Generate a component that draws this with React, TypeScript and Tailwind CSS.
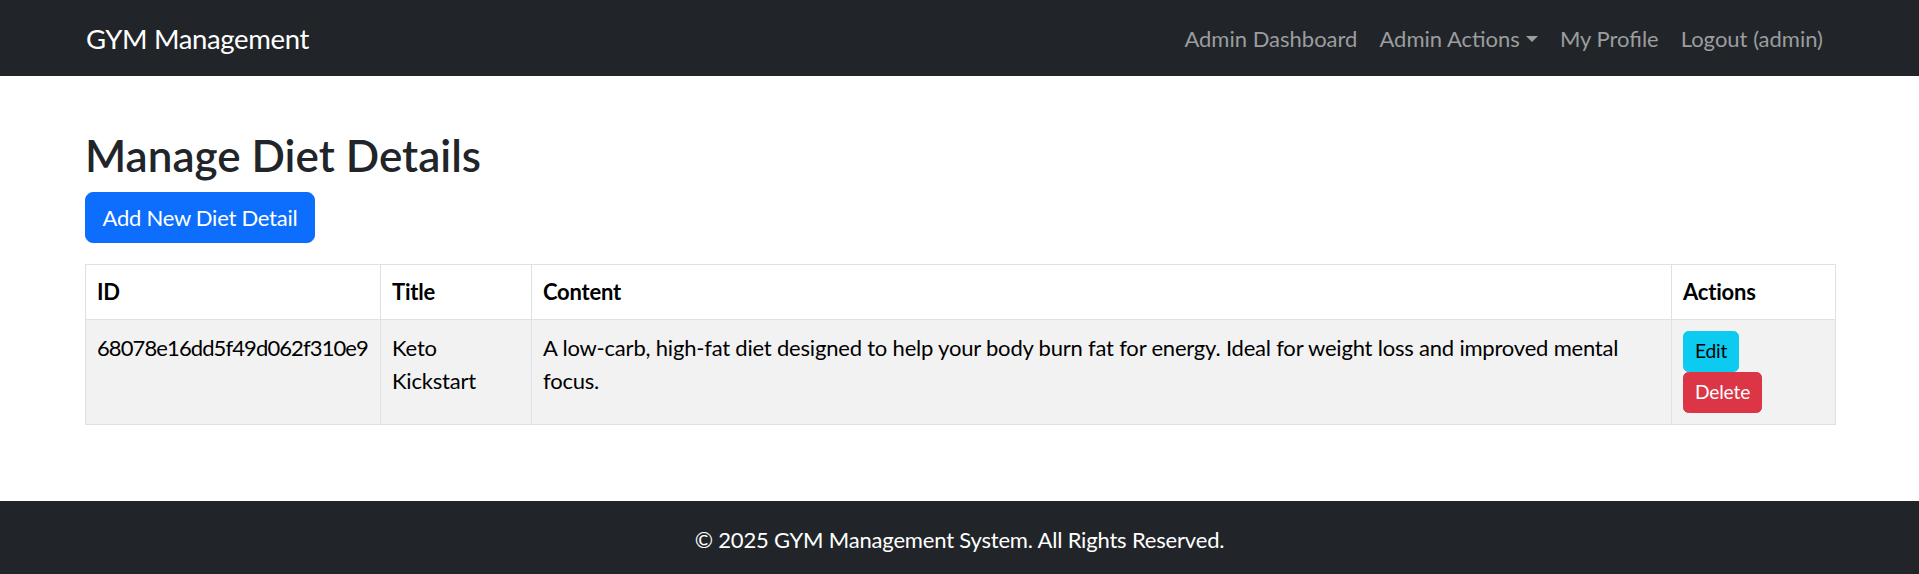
import React from "react";

const font = { fontFamily: "Lato, 'Noto Sans', sans-serif" };

function NavLink({ children, caret }: { children: React.ReactNode; caret?: boolean }) {
  return (
    <a href="#" className="flex items-center px-[11px] leading-[33px] text-[22px] text-[#9b9d9f] hover:text-[#bfc1c3]">
      {children}
      {caret && (
        <span className="ml-[6px] mt-[2px] inline-block h-0 w-0 border-x-[6.5px] border-t-[6.5px] border-x-transparent border-t-[#9b9d9f]" />
      )}
    </a>
  );
}

export default function App() {
  return (
    <div style={font} className="min-h-screen bg-white text-[#212529]">
      <nav className="flex h-[76px] items-center justify-between bg-[#212529] pl-[86px] pr-[85px]">
        <a href="#" className="text-[27.5px] leading-[41px] tracking-[-0.35px] text-white">
          GYM Management
        </a>
        <div className="flex items-center">
          <NavLink>Admin Dashboard</NavLink>
          <NavLink caret>Admin Actions</NavLink>
          <NavLink>My Profile</NavLink>
          <NavLink>Logout (admin)</NavLink>
        </div>
      </nav>

      <main className="px-[85px] pt-[53px] pb-[76px]">
        <h2 className="mb-[10px] text-[44px] font-semibold leading-[1.2]">Manage Diet Details</h2>
        <button
          type="button"
          className="h-[51px] rounded-[8px] border border-[#0d6efd] bg-[#0d6efd] px-[16.5px] text-[22px] leading-[33px] tracking-[-0.25px] text-white"
        >
          Add New Diet Detail
        </button>

        <table className="mt-[21px] w-[1750px] table-fixed border-collapse text-[22px] leading-[33px] tracking-[-0.2px] text-black">
          <colgroup>
            <col className="w-[295px]" />
            <col className="w-[151px]" />
            <col className="w-[1140px]" />
            <col className="w-[164px]" />
          </colgroup>
          <thead>
            <tr className="bg-white text-left">
              <th className="border border-[#dee2e6] px-[11px] py-[10.5px] font-bold">ID</th>
              <th className="border border-[#dee2e6] px-[11px] py-[10.5px] font-bold">Title</th>
              <th className="border border-[#dee2e6] px-[11px] py-[10.5px] font-bold">Content</th>
              <th className="border border-[#dee2e6] px-[11px] py-[10.5px] font-bold">Actions</th>
            </tr>
          </thead>
          <tbody>
            <tr className="bg-[#f2f2f2] align-top">
              <td className="border border-[#dee2e6] p-[11px] tracking-[-0.9px]">68078e16dd5f49d062f310e9</td>
              <td className="border border-[#dee2e6] p-[11px]">
                Keto
                <br />
                Kickstart
              </td>
              <td className="border border-[#dee2e6] p-[11px]">
                A low-carb, high-fat diet designed to help your body burn fat for energy. Ideal for weight loss and improved mental
                <br />
                focus.
              </td>
              <td className="border border-[#dee2e6] p-[11px]">
                <div className="flex flex-col items-start">
                  <button
                    type="button"
                    className="rounded-[5.5px] border border-[#0dcaf0] bg-[#0dcaf0] px-[11px] py-[5.5px] text-[19.25px] leading-[28px] text-black"
                  >
                    Edit
                  </button>
                  <button
                    type="button"
                    className="rounded-[5.5px] border border-[#dc3545] bg-[#dc3545] px-[11px] py-[5.5px] text-[19.25px] leading-[28px] text-white"
                  >
                    Delete
                  </button>
                </div>
              </td>
            </tr>
          </tbody>
        </table>
      </main>

      <footer className="bg-[#212529] py-[22px] text-center text-[22px] leading-[33px] tracking-[-0.18px] text-white">
        © 2025 GYM Management System. All Rights Reserved.
      </footer>
    </div>
  );
}
